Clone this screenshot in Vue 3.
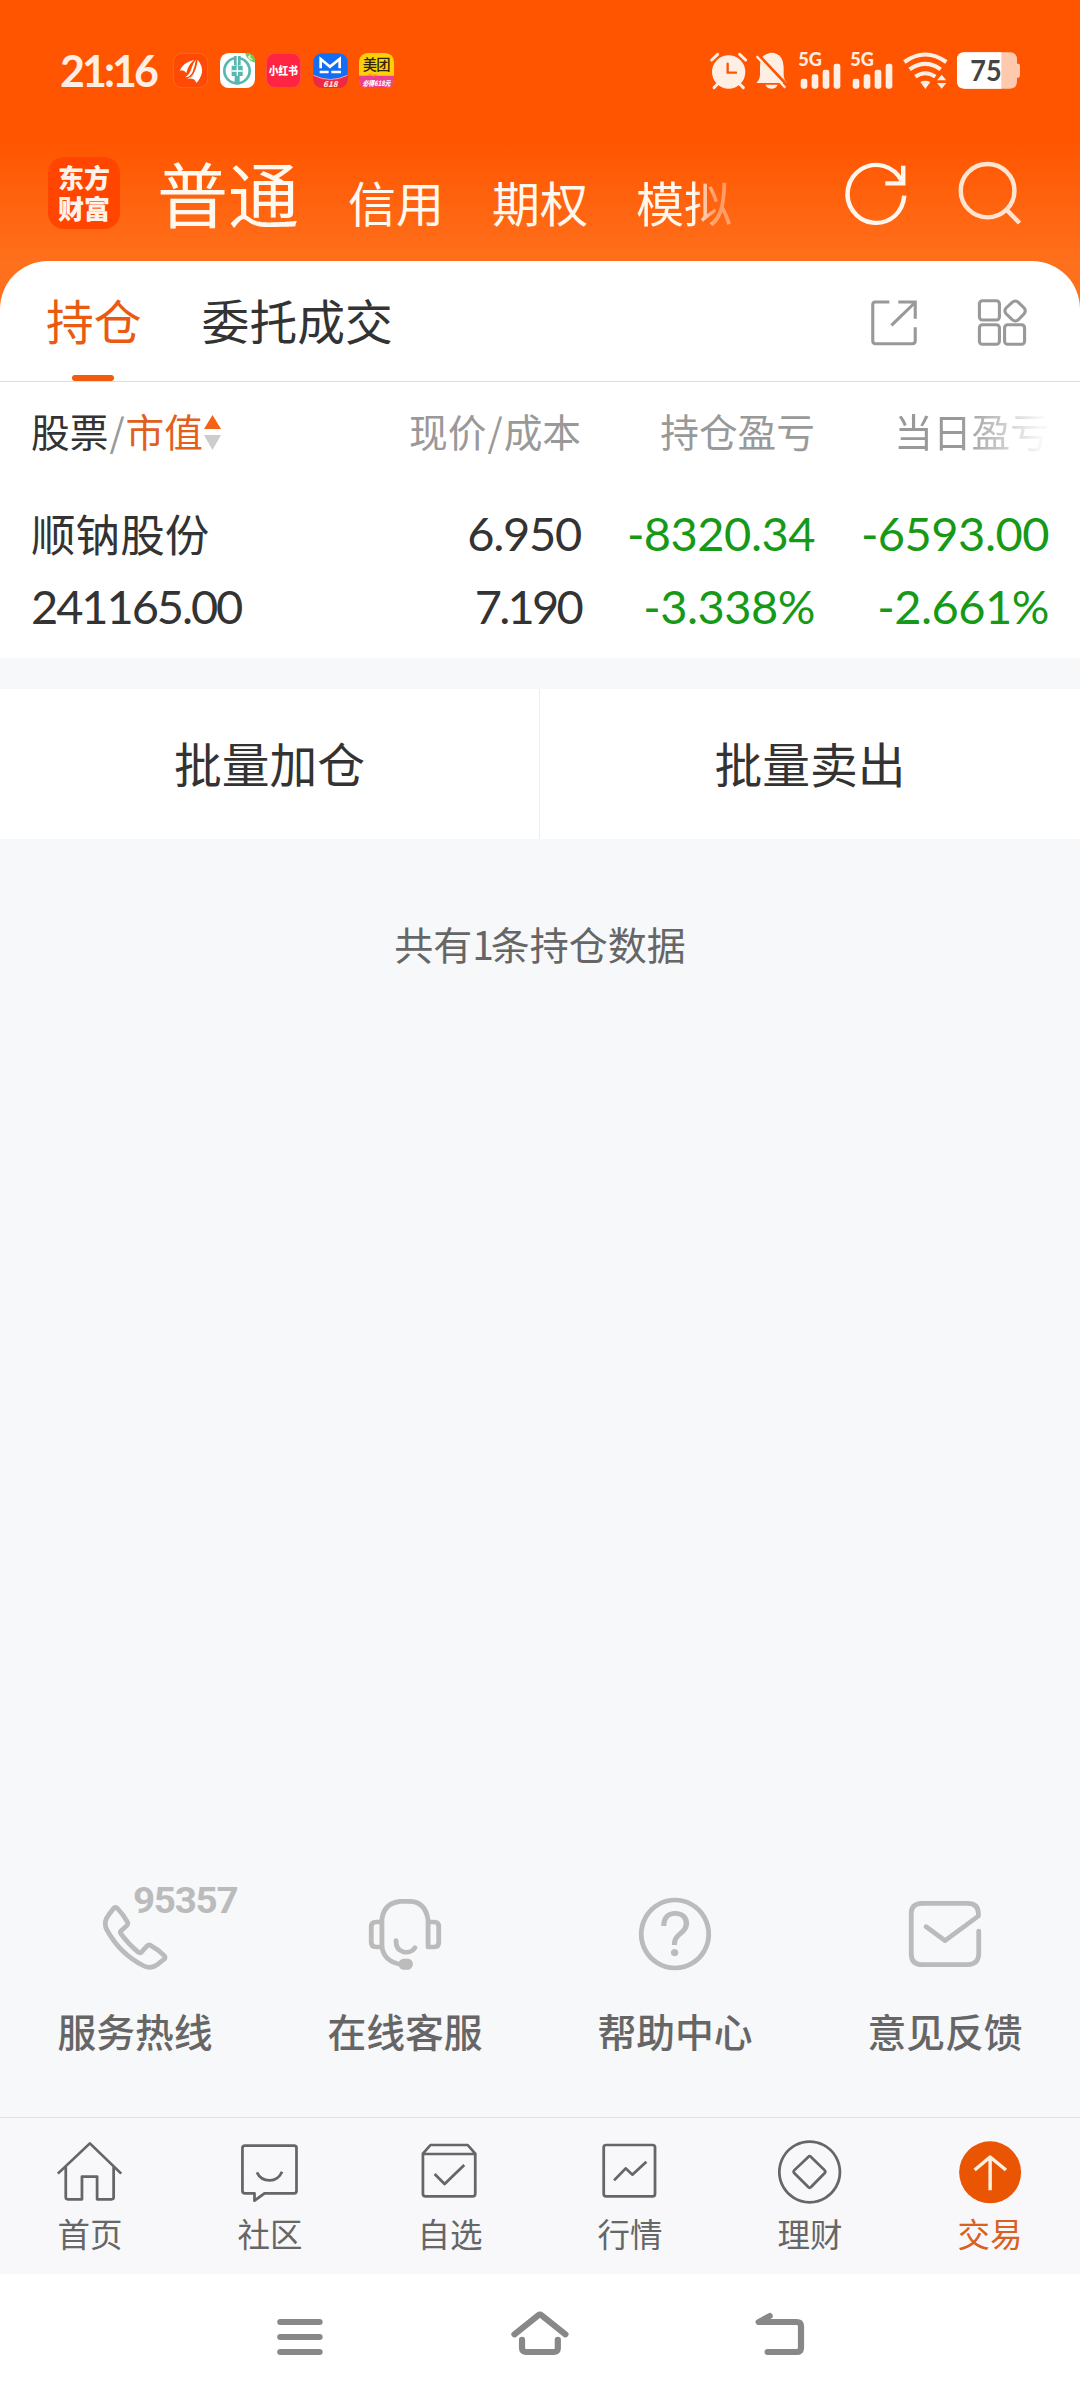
<!-- src/App.vue -->
<template>
  <div class="screen">
    <header class="top">
      <div class="status-bar">
        <span class="clock">21:16</span>
        <div class="notifications">
          <svg class="app-icon" viewBox="0 0 105 105">
            <rect x="1" y="1" width="103" height="103" rx="26" fill="#ff4a05" stroke="#ff7432" stroke-width="2" />
            <path fill="#fff" d="M20 53Q30 28 64 20Q45 36 40 60Q32 48 20 53ZM37 73Q52 62 57 41Q61 29 69 20Q65 42 59 56Q52 72 37 73ZM42 77Q68 68 74 20Q90 40 87 58Q83 78 70 90Q66 74 42 77Z" />
            <path d="M66 20Q48 38 43 62M71 20Q67 58 52 74" fill="none" stroke="#ff4a05" stroke-width="2.5" />
          </svg>
          <svg class="app-icon" viewBox="0 0 105 105">
            <rect width="105" height="105" rx="26" fill="#fff" />
            <path d="M75 0H79Q105 0 105 26V29Q82 24 75 0Z" fill="#6fc85c" />
            <path d="M84 10L97 20M90 6L87 20" stroke="#d5f4cf" stroke-width="4" />
            <circle cx="51" cy="53" r="38" fill="none" stroke="#56b8b0" stroke-width="8" />
            <path d="M42 9H62V37H42ZM35 38H68V69H35ZM44 69H59V94H44Z" fill="#56b8b0" />
            <path d="M52 9V35M35 54H68M52 40V68M31 34V74M72 34V74" stroke="#fff" stroke-width="4" />
          </svg>
          <svg class="app-icon" viewBox="0 0 105 105">
            <rect x="1" y="1" width="103" height="103" rx="26" fill="#ff2442" stroke="#ff5a50" stroke-width="2" />
            <text x="52" y="65" class="tiny" font-size="33" textLength="87" lengthAdjust="spacingAndGlyphs" text-anchor="middle" fill="#fff">小红书</text>
          </svg>
          <svg class="app-icon" viewBox="0 0 105 105">
            <rect x="1" y="1" width="103" height="103" rx="26" fill="#146ef5" />
            <path d="M2 67Q52 92 103 67V79Q103 104 79 104H26Q2 104 2 79Z" fill="#ee2945" />
            <path d="M2 67Q52 92 103 67" fill="none" stroke="#ff9ba0" stroke-width="3" />
            <path d="M23 46V18L51 41L80 18V46M20 57H47M55 57H84" fill="none" stroke="#fff" stroke-width="8" />
            <text x="52" y="101" class="tiny italic" font-size="24" text-anchor="middle" fill="#ffe0d0">618</text>
          </svg>
          <svg class="app-icon" viewBox="0 0 105 105">
            <rect width="105" height="105" rx="26" fill="#fdd00b" />
            <path d="M0 68H105V79Q105 105 79 105H26Q0 105 0 79Z" fill="#ec3f91" />
            <path d="M20 68L39 59L34 66L56 64L40 75L44 68Z" fill="#ff8b25" />
            <text x="53" y="51" class="meituan" font-size="43" textLength="84" text-anchor="middle" fill="#2e2508">美团</text>
            <text x="53" y="98" class="tiny italic" font-size="22" textLength="84" lengthAdjust="spacingAndGlyphs" text-anchor="middle" fill="#fff">必得618元</text>
          </svg>
        </div>
        <div class="indicators">
          <svg width="38" height="37" viewBox="63 67 114 111" fill="none" stroke="#ffeee4" stroke-linecap="round">
            <circle cx="119" cy="127" r="50" fill="#ffeee4" stroke="none" />
            <path d="M68 91L86 74M152 74L170 91M75 174L86 163M152 163L163 174" stroke-width="9" />
            <path d="M116 102V129H141" stroke="#ff5500" stroke-width="7" />
          </svg>
          <svg width="33" height="37" viewBox="199 67 99 111">
            <path fill="#ffeee4" d="M203 160Q214 149 214 135V113Q214 77 235 73Q249 65 264 73Q284 80 285 113V139Q287 153 295 160ZM230 165H267Q262 177 249 177Q235 177 230 165Z" />
            <path d="M209 75L298 169" stroke="#ff5500" stroke-width="8" />
            <path d="M204 80L290 174" stroke="#ffeee4" stroke-width="7" />
          </svg>
          <svg v-for="sim in 2" :key="sim" width="43" height="37" viewBox="322 67 129 111" fill="#ffeee4">
            <text x="323" y="110" class="network" font-size="54" textLength="71" lengthAdjust="spacingAndGlyphs">5G</text>
            <rect x="330" y="147" width="20" height="30" rx="7" />
            <rect x="363" y="134" width="20" height="43" rx="7" />
            <rect x="396" y="120" width="20" height="57" rx="7" />
            <rect x="429" y="102" width="20" height="75" rx="7" />
          </svg>
          <svg width="45" height="37" viewBox="640 67 135 111" fill="none" stroke="#ffeee4" stroke-width="12">
            <path d="M644 97Q707 52 770 97M660 119Q707 86 753 119M677 141Q707 120 737 141" />
            <path d="M692 157Q707 149 722 157L707 178ZM742 152L756 135L770 152ZM742 160H770L756 177Z" fill="#ffeee4" stroke="none" />
          </svg>
          <svg width="63" height="37" viewBox="801 67 189 111">
            <path d="M823 68H960Q981 68 981 91V102H985Q990 102 990 108V137Q990 144 985 144H981V155Q981 177 960 177H823Q801 177 801 155V91Q801 68 823 68Z" fill="#ffc9ad" />
            <path d="M934 68H823Q801 68 801 91V155Q801 177 823 177H934Z" fill="#fff" />
            <text x="841" y="153" class="battery" font-size="84" textLength="94" lengthAdjust="spacingAndGlyphs" fill="#444">75</text>
          </svg>
        </div>
      </div>
      <div class="accounts">
        <div class="brand">东方<br>财富</div>
        <nav class="account-tabs">
          <span
            v-for="account in accounts"
            :key="account"
            :class="{ current: account === currentAccount }"
            @click="currentAccount = account"
          >{{ account }}</span>
        </nav>
        <svg class="refresh" width="64" height="66" viewBox="880 94 186 198" preserveAspectRatio="none" fill="none" stroke="#fff6ee" stroke-width="13">
          <path d="M1058 195Q1055 233 1030 256A83 87 0 1 1 1050 150M1003 158H1055V105" />
        </svg>
        <svg width="64" height="66" viewBox="1212 91 186 198" preserveAspectRatio="none" fill="none" stroke="#ffe4d2" stroke-width="13">
          <ellipse cx="1298" cy="180" rx="78" ry="80" />
          <path d="M1351 235L1391 277" />
        </svg>
      </div>
    </header>

    <section class="card">
      <div class="tabs">
        <span
          v-for="tab in tabs"
          :key="tab"
          class="tab"
          :class="{ active: tab === activeTab }"
          @click="activeTab = tab"
        ><span class="tab-text">{{ tab }}</span></span>
        <svg class="share" width="48" height="48" viewBox="959 51 139 144" preserveAspectRatio="none" fill="none" stroke="#999" stroke-width="9">
          <path d="M1015 60H975Q967 60 967 68V177Q967 185 975 185H1082Q1090 185 1090 177V136M1041 60H1090V110M1088 63L1021 130" />
        </svg>
        <svg width="50" height="50" viewBox="1269 53 145 150" preserveAspectRatio="none" fill="none" stroke="#999" stroke-width="9">
          <rect x="1276" y="61" width="58" height="58" rx="9" />
          <rect x="1276" y="133" width="58" height="59" rx="9" />
          <rect x="1349" y="133" width="58" height="59" rx="9" />
          <path d="M1371 66Q1380 58 1389 66L1405 82Q1413 92 1405 101L1389 118Q1380 126 1371 118L1354 101Q1346 92 1354 82Z" />
        </svg>
      </div>
      <div class="grid head">
        <div class="sort">
          <span class="dark">股票</span><i>/</i><span class="orange">市值</span>
          <svg width="17" height="36" viewBox="0 0 17 36">
            <path d="M8.5 0L17 14H0Z" fill="#f26414" />
            <path d="M8.5 35L17 20H0Z" fill="#ccc" />
          </svg>
        </div>
        <div>现价<i>/</i>成本</div>
        <div>持仓盈亏</div>
        <div class="fade">当日盈亏</div>
      </div>
      <div v-for="row in holdings" :key="row.name" class="grid body">
        <div><b class="name">{{ row.name }}</b><b class="value">{{ row.value }}</b></div>
        <div><b>{{ row.price }}</b><b class="cost">{{ row.cost }}</b></div>
        <div class="down"><b>{{ row.profit }}</b><b>{{ row.profitRate }}</b></div>
        <div class="down"><b>{{ row.today }}</b><b>{{ row.todayRate }}</b></div>
      </div>
    </section>

    <div class="batch">
      <button>批量加仓</button>
      <button>批量卖出</button>
    </div>

    <p class="count">共有<span>{{ holdings.length }}</span>条持仓数据</p>

    <div class="services">
      <div v-for="service in services" :key="service.label" class="service">
        <svg width="270" height="94" viewBox="0 60 784 282" preserveAspectRatio="none">
          <path :d="service.line" fill="none" stroke="#bbb" stroke-width="14" stroke-linecap="round" stroke-linejoin="round" />
          <path v-if="service.fill" :d="service.fill" fill="#bbb" />
          <text v-if="service.phone" x="386" y="158" class="phone" font-size="112" textLength="307" lengthAdjust="spacing">{{ service.phone }}</text>
        </svg>
        <span>{{ service.label }}</span>
      </div>
    </div>

    <nav class="bottom-nav">
      <div v-for="item in navItems" :key="item.label" class="nav-item" :class="{ selected: item.selected }">
        <svg width="180" height="70" :viewBox="`${item.x} 110 522.7 210`" preserveAspectRatio="none" fill="none" stroke-linejoin="round">
          <ellipse v-if="item.selected" cx="1307" cy="216" rx="90" ry="93" fill="#ea5504" />
          <path :d="item.d" :stroke="item.selected ? '#fff0df' : '#666'" :stroke-width="item.selected ? 10 : 8" />
        </svg>
        <span>{{ item.label }}</span>
      </div>
    </nav>

    <div class="system-bar">
      <svg v-for="key in systemKeys" :key="key.x" width="240" height="67" :viewBox="`${key.x} 600 697 201`" preserveAspectRatio="none">
        <path :d="key.d" fill="none" stroke="#888" stroke-width="18" stroke-linecap="round" stroke-linejoin="round" />
      </svg>
    </div>
  </div>
</template>

<script setup>
import { ref } from 'vue'

const accounts = ['普通', '信用', '期权', '模拟']
const currentAccount = ref('普通')

const tabs = ['持仓', '委托成交']
const activeTab = ref('持仓')

const holdings = ref([
  {
    name: '顺钠股份',
    value: '241165.00',
    price: '6.950',
    cost: '7.190',
    profit: '-8320.34',
    profitRate: '-3.338%',
    today: '-6593.00',
    todayRate: '-2.661%'
  }
])

const services = [
  {
    label: '服务热线',
    phone: '95357',
    line: 'M331 144Q335 140 340 144Q358 163 371 188Q372 192 369 196L351 213Q348 217 351 221Q373 253 402 277Q407 280 411 276L428 257Q432 253 437 256Q459 268 477 287Q481 292 477 297L458 313Q439 328 418 318Q349 283 310 209Q302 193 309 175Q317 161 331 144Z'
  },
  {
    label: '在线客服',
    line: 'M325 186H308Q294 186 294 200V247Q294 261 308 261H325M459 186H477Q490 186 490 200V247Q490 261 477 261H459V181Q452 124 404 124H378Q330 130 325 178V257Q328 301 374 312M366 242C365 282 407 285 421 263',
    fill: 'M386 296H402Q415 300 415 312Q414 326 402 329H386Q374 327 373 312Q374 299 386 296Z'
  },
  {
    label: '帮助中心',
    line: 'M392 120A98 102 0 1 1 391.9 120Z',
    fill: 'M352 198C352 168 369 153 392 153C418 153 433 168 433 190C433 205 425 216 413 226C403 235 398 239 398 255H383C383 235 390 227 402 216C413 206 417 201 417 189C417 176 408 167 392 167C375 167 367 178 367 198ZM391 267A11 11 0 1 1 390.9 267Z'
  },
  {
    label: '意见反馈',
    line: 'M337 200L392 242L489 168V160Q488 130 458 130H325Q294 131 294 160V283Q295 314 325 314H458Q488 313 490 283V213'
  }
]

// x is where each icon starts on its half of the bar
const navItems = [
  { label: '首页', x: 0, d: 'M168 220L261 129L352 220M191 200V291Q191 297 197 297H238V229H282V297H324Q330 297 330 291V200' },
  { label: '社区', x: 522.7, d: 'M712 136H854Q861 136 861 143V272Q861 279 854 279H768L739 301V279H712Q704 279 704 272V143Q704 136 712 136ZM746 216Q757 240 783 240Q808 240 819 214' },
  { label: '自选', x: 1045.3, d: 'M1228 160L1250 134H1358L1380 160V280Q1380 288 1372 288H1236Q1228 288 1228 280ZM1228 161H1380M1262 221L1291 251L1348 194' },
  { label: '行情', x: 0, d: 'M192 134H327Q334 134 334 141V281Q334 288 327 288H192Q185 288 185 281V141Q185 134 192 134ZM215 240L249 204L268 223L309 184' },
  { label: '理财', x: 522.7, d: 'M783 124A88 91 0 1 1 782.9 124ZM779 170Q783 165 787 170L827 210Q830 214 827 218L787 260Q783 265 779 260L738 218Q735 214 738 210Z' },
  { label: '交易', x: 1045.3, selected: true, d: 'M1307 270V171M1262 209L1307 170L1353 209' }
]

const systemKeys = [
  { x: 522.7, d: 'M814 666H928M814 711H928M814 756H928' },
  { x: 1219.7, d: 'M1494 703L1563 646Q1568 642 1573 646L1642 703M1516 719V744Q1516 756 1529 756H1608Q1620 756 1620 744V719' },
  { x: 348.5, d: 'M667 648L635 666H745Q758 666 758 679V743Q758 756 745 756H661' }
]
</script>

<style>
body {
  background: #f7f8fa;
}
</style>

<style scoped>
.screen {
  display: flex;
  flex-direction: column;
  width: 1080px;
  height: 2400px;
  overflow: hidden;
  background: #f7f8fa;
  color: #333;
  font-family: "Noto Sans CJK SC", sans-serif;
}

svg {
  display: block;
  flex: none;
  overflow: visible;
}

.top {
  height: 309px;
  background: linear-gradient(#ff5500 140px, #ff701c 261px);
}

.status-bar {
  display: flex;
  align-items: center;
  height: 141px;
  padding: 0 60px;
  box-sizing: border-box;
}

.clock {
  width: 113px;
  color: #ffeee4;
  font: 700 43px/58px Lato, sans-serif;
  letter-spacing: -3px;
}

.notifications {
  display: flex;
  gap: 11.6px;
}

.app-icon {
  width: 35px;
  height: 35px;
}

.tiny {
  font-weight: 900;
}

.meituan {
  font-weight: 500;
}

.italic {
  font-style: italic;
}

.network {
  font-family: Lato, sans-serif;
  font-weight: 900;
}

.battery {
  font-family: Lato, sans-serif;
  font-weight: 700;
}

.indicators {
  display: flex;
  gap: 9.4px;
  margin-left: auto;
}

.indicators svg:first-child {
  margin-right: -2px;
}

.accounts {
  display: flex;
  height: 120px;
  padding: 16px 58px 0 48px;
  box-sizing: border-box;
}

.brand {
  height: 72px;
  width: 72px;
  padding-top: 4px;
  box-sizing: border-box;
  border-radius: 16px;
  background: #ff4500;
  color: #fff3e9;
  font-size: 26px;
  font-weight: 900;
  line-height: 31px;
  text-align: center;
}

.account-tabs {
  display: flex;
  align-items: baseline;
  gap: 48px;
  height: 90px;
  margin: -2px 0 0 37px;
  color: #fff8ef;
  font-size: 48px;
  line-height: 72px;
}

.account-tabs .current {
  margin-right: 1px;
  font-size: 71px;
}

.account-tabs span:last-child {
  mask-image: linear-gradient(90deg, #000 60%, rgba(0, 0, 0, 0.4) 82%);
}

.refresh {
  margin-left: auto;
  margin-right: 51px;
}

.accounts > svg {
  margin-top: 4px;
}

.accounts > .refresh {
  margin-top: 5px;
}

.card {
  height: 397px;
  margin-top: -48px;
  border-radius: 48px 48px 0 0;
  background: #fff;
}

.tabs {
  display: flex;
  align-items: center;
  height: 121px;
  padding: 0 53px 0 46px;
  border-bottom: 1px solid #ddd;
  box-sizing: border-box;
}

.tab {
  position: relative;
  height: 120px;
  margin-right: 60px;
  font-size: 47.8px;
  line-height: 117px;
}

.tab.active {
  color: #ea5a10;
}

.tab.active::after {
  content: "";
  position: absolute;
  bottom: 0;
  left: 26px;
  width: 42px;
  height: 6px;
  border-radius: 3px;
  background: #f25a0c;
}

.tabs svg {
  margin-top: 3px;
}

.tabs .share {
  margin-left: auto;
  margin-right: 59px;
}

.grid {
  display: grid;
  grid-template-columns: 300px 250px 234px 234px;
  padding: 0 31px;
  text-align: right;
}

.head {
  height: 102px;
  color: #999;
  font-size: 38.7px;
  line-height: 96px;
}

.head i {
  padding: 0 1px;
  font-style: normal;
}

.sort {
  display: flex;
  align-items: center;
  height: 96px;
}

.sort svg {
  margin: 5px 0 0 1px;
}

.dark {
  color: #333;
}

.orange {
  color: #e2601c;
}

.fade {
  mask-image: linear-gradient(90deg, #000 62%, rgba(0, 0, 0, 0.08) 96%);
}

.body > div {
  display: flex;
  flex-direction: column;
}

.body > div:first-child {
  text-align: left;
}

.body b {
  height: 73px;
  font: 400 47px/99px Lato, sans-serif;
  letter-spacing: -1.3px;
}

.body .value {
  letter-spacing: -2.1px;
}

.body .cost {
  letter-spacing: -2.8px;
}

.body .name {
  font: 400 44.6px/97px "Noto Sans CJK SC", sans-serif;
  letter-spacing: 0;
}

.body .down b {
  color: #169916;
  letter-spacing: -0.5px;
}

.batch {
  display: flex;
  height: 150px;
  margin-top: 31px;
}

.batch button {
  width: 540px;
  padding: 0 0 3px;
  border: 0;
  background: #fff;
  color: #333;
  font: 47.8px/147px "Noto Sans CJK SC", sans-serif;
}

.batch button:first-child {
  border-right: 1px solid #eceef0;
}

.count {
  margin: 75px 0 0;
  color: #666;
  font-size: 39px;
  line-height: 58px;
  text-align: center;
}

.count span {
  letter-spacing: -3px;
}

.services {
  display: flex;
  margin-top: auto;
  height: 237px;
}

.service {
  width: 270px;
  color: #666;
  font-size: 38.8px;
  font-weight: 500;
  line-height: 58px;
  text-align: center;
}

.service span {
  display: block;
  margin-top: 27px;
}

.phone {
  fill: #bbb;
  font-family: Roboto, sans-serif;
  font-weight: 700;
}

.bottom-nav {
  display: flex;
  height: 157px;
  padding-top: 19px;
  border-top: 1px solid #e1e2e4;
  background: #f8f8fa;
  box-sizing: border-box;
}

.nav-item {
  width: 180px;
  color: #666;
  font-size: 32.5px;
  line-height: 50px;
  text-align: center;
}

.nav-item span {
  display: block;
  margin-top: 1px;
}

.nav-item.selected {
  color: #d9601f;
}

.system-bar {
  display: flex;
  justify-content: center;
  height: 126px;
  padding-top: 26px;
  background: #fff;
  box-sizing: border-box;
}
</style>
